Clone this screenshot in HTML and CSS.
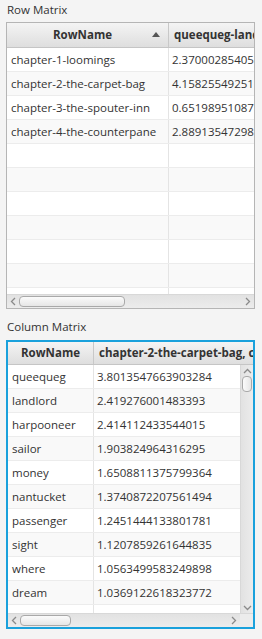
FILE: index.html
```html
<!DOCTYPE html>
<html lang="en">
<head>
  <meta charset="UTF-8">
  <title>Matrix View</title>
  <link rel="stylesheet" href="styles.css">
</head>
<body>
  <div class="caption">Row Matrix</div>
  <div class="table row-matrix">
    <div class="head">
      <div class="th c1 sorted">RowName<span class="sort"></span></div>
      <div class="th c2 left">queequeg-landlord-harpooneer</div>
    </div>
    <div class="rows">
      <div class="tr"><div class="td c1">chapter-1-loomings</div><div class="td c2">2.3700028540555523</div></div>
      <div class="tr"><div class="td c1">chapter-2-the-carpet-bag</div><div class="td c2">4.1582554925117724</div></div>
      <div class="tr"><div class="td c1">chapter-3-the-spouter-inn</div><div class="td c2">0.6519895108775512</div></div>
      <div class="tr"><div class="td c1">chapter-4-the-counterpane</div><div class="td c2">2.8891354729899831</div></div>
      <div class="tr"><div class="td c1"></div><div class="td c2"></div></div>
      <div class="tr"><div class="td c1"></div><div class="td c2"></div></div>
      <div class="tr"><div class="td c1"></div><div class="td c2"></div></div>
      <div class="tr"><div class="td c1"></div><div class="td c2"></div></div>
      <div class="tr"><div class="td c1"></div><div class="td c2"></div></div>
      <div class="tr"><div class="td c1"></div><div class="td c2"></div></div>
      <div class="tr"><div class="td c1"></div><div class="td c2"></div></div>
    </div>
    <div class="hbar">
      <div class="arrow"><svg width="6" height="9" viewBox="0 0 6 9"><path d="M5 1L1.5 4.5L5 8" fill="none" stroke="#8a8a8a" stroke-width="1.3"/></svg></div>
      <div class="track"><div class="thumb wide"></div></div>
      <div class="arrow"><svg width="6" height="9" viewBox="0 0 6 9"><path d="M1 1L4.5 4.5L1 8" fill="none" stroke="#8a8a8a" stroke-width="1.3"/></svg></div>
    </div>
  </div>

  <div class="caption second">Column Matrix</div>
  <div class="table col-matrix">
    <div class="head">
      <div class="th c1">RowName</div>
      <div class="th c2 left">chapter-2-the-carpet-bag, chapter-3-the-spouter-inn</div>
    </div>
    <div class="middle">
      <div class="rows">
        <div class="tr"><div class="td c1">queequeg</div><div class="td c2">3.8013547663903284</div></div>
        <div class="tr"><div class="td c1">landlord</div><div class="td c2">2.419276001483393</div></div>
        <div class="tr"><div class="td c1">harpooneer</div><div class="td c2">2.414112433544015</div></div>
        <div class="tr"><div class="td c1">sailor</div><div class="td c2">1.903824964316295</div></div>
        <div class="tr"><div class="td c1">money</div><div class="td c2">1.6508811375799364</div></div>
        <div class="tr"><div class="td c1">nantucket</div><div class="td c2">1.3740872207561494</div></div>
        <div class="tr"><div class="td c1">passenger</div><div class="td c2">1.2451444133801781</div></div>
        <div class="tr"><div class="td c1">sight</div><div class="td c2">1.1207859261644835</div></div>
        <div class="tr"><div class="td c1">where</div><div class="td c2">1.0563499583249898</div></div>
        <div class="tr"><div class="td c1">dream</div><div class="td c2">1.0369122618323772</div></div>
        <div class="tr"><div class="td c1"></div><div class="td c2"></div></div>
      </div>
      <div class="vbar">
        <div class="varrow"><svg width="9" height="6" viewBox="0 0 9 6"><path d="M1 5L4.5 1.5L8 5" fill="none" stroke="#8a8a8a" stroke-width="1.3"/></svg></div>
        <div class="vtrack"><div class="vthumb"></div></div>
        <div class="varrow"><svg width="9" height="6" viewBox="0 0 9 6"><path d="M1 1L4.5 4.5L8 1" fill="none" stroke="#8a8a8a" stroke-width="1.3"/></svg></div>
      </div>
    </div>
    <div class="bottom">
      <div class="hbar">
        <div class="arrow"><svg width="6" height="9" viewBox="0 0 6 9"><path d="M5 1L1.5 4.5L5 8" fill="none" stroke="#8a8a8a" stroke-width="1.3"/></svg></div>
        <div class="track"><div class="thumb narrow"></div></div>
        <div class="arrow"><svg width="6" height="9" viewBox="0 0 6 9"><path d="M1 1L4.5 4.5L1 8" fill="none" stroke="#8a8a8a" stroke-width="1.3"/></svg></div>
      </div>
      <div class="corner"></div>
    </div>
  </div>
</body>
</html>
```

FILE: styles.css
```css
body {
  margin: 0;
  padding: 0 7px 0 6px;
  background: #f4f4f4;
  font-family: "Open Sans", "Noto Sans", Arial, sans-serif;
  font-size: 11.5px;
  color: #333;
}
.caption {
  height: 22px;
  line-height: 20px;
  padding-left: 1px;
  color: #333;
}
.caption.second {
  margin-top: 8px;
  height: 23px;
}

/* table shell */
.table {
  background: #fff;
  border: 1px solid #b5b5b5;
  display: flex;
  flex-direction: column;
  overflow: hidden;
}
.row-matrix {
  height: 285px;
}
.col-matrix {
  height: 285px;
  border: 2px solid #1aa1dc;
}
.head {
  display: flex;
  height: 24px;
  border-bottom: 1px solid #c5c5c5;
  background: linear-gradient(to bottom, #f4f4f4, #dedede);
  flex: none;
}
.row-matrix .head { height: 24px; }
.col-matrix .head { height: 22px; }
.th {
  position: relative;
  flex: none;
  font-weight: bold;
  text-align: center;
  line-height: 24px;
  white-space: nowrap;
  overflow: hidden;
  border-right: 1px solid #c8c8c8;
  box-sizing: border-box;
}
.th.sorted {
  padding-right: 10px;
}
.col-matrix .th { line-height: 22px; }
.th.left {
  text-align: left;
  padding-left: 5px;
  border-right: none;
  flex: 1;
}
.sort {
  position: absolute;
  right: 8px;
  top: 9px;
  width: 0;
  height: 0;
  border-left: 4px solid transparent;
  border-right: 4px solid transparent;
  border-bottom: 5px solid #555;
}

.rows {
  flex: 1;
  overflow: hidden;
  min-width: 0;
}
.tr {
  display: flex;
  height: 23px;
  border-bottom: 1px solid #ececec;
}
.tr:nth-child(even) {
  background: #f9f9f9;
}
.td {
  flex: none;
  line-height: 23px;
  white-space: nowrap;
  overflow: hidden;
  padding-left: 4px;
  box-sizing: border-box;
}
.td.c2 {
  flex: 1;
  padding-left: 3px;
}
.td.c1 {
  border-right: 1px solid #e4e4e4;
}
.row-matrix .c1 { width: 162px; }
.col-matrix .c1 { width: 86px; }

/* scrollbars */
.hbar {
  height: 14px;
  flex: none;
  display: flex;
  background: linear-gradient(to bottom, #e2e2e2, #ececec);
  border-top: 1px solid #d8d8d8;
  box-sizing: border-box;
}
.arrow {
  width: 12px;
  display: flex;
  align-items: center;
  justify-content: center;
}
.track {
  flex: 1;
  padding: 1px 0;
  box-sizing: border-box;
}
.thumb {
  height: 100%;
  box-sizing: border-box;
  border: 1px solid #a9a9a9;
  border-radius: 4px;
  background: linear-gradient(to bottom, #fbfbfb, #e6e6e6);
}
.thumb.wide { width: 106px; }
.thumb.narrow { width: 51px; }

.middle {
  flex: 1;
  display: flex;
  min-height: 0;
}
.vbar {
  width: 12px;
  flex: none;
  display: flex;
  flex-direction: column;
  background: linear-gradient(to right, #e2e2e2, #ececec);
  border-left: 1px solid #d8d8d8;
}
.varrow {
  height: 11px;
  display: flex;
  align-items: center;
  justify-content: center;
}
.vtrack {
  flex: 1;
  padding: 0 1px;
}
.vthumb {
  height: 16px;
  border: 1px solid #a9a9a9;
  border-radius: 4px;
  background: linear-gradient(to right, #fbfbfb, #e6e6e6);
  box-sizing: border-box;
}
.bottom {
  display: flex;
  flex: none;
}
.bottom .hbar { flex: 1; }
.corner {
  width: 13px;
  background: #ececec;
  border-top: 1px solid #d8d8d8;
}
```
